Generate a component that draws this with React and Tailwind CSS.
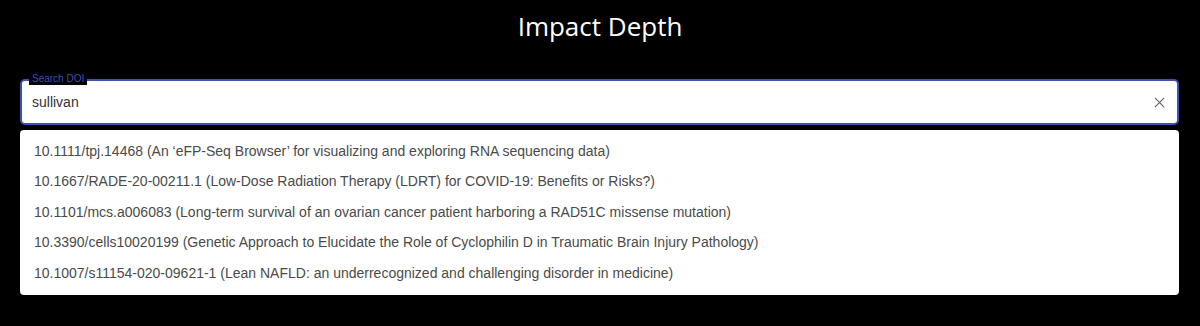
import React from 'react';

const results = [
  "10.1111/tpj.14468 (An \u2018eFP-Seq Browser\u2019 for visualizing and exploring RNA sequencing data)",
  "10.1667/RADE-20-00211.1 (Low-Dose Radiation Therapy (LDRT) for COVID-19: Benefits or Risks?)",
  "10.1101/mcs.a006083 (Long-term survival of an ovarian cancer patient harboring a RAD51C missense mutation)",
  "10.3390/cells10020199 (Genetic Approach to Elucidate the Role of Cyclophilin D in Traumatic Brain Injury Pathology)",
  "10.1007/s11154-020-09621-1 (Lean NAFLD: an underrecognized and challenging disorder in medicine)",
];

export default function App() {
  return (
    <div className="w-[1200px] h-[326px] bg-black px-[20px] pt-[8px] font-['Liberation_Sans',Arial,sans-serif]">
      <h1 className="text-center text-white text-[26px] leading-[36px] font-['Open_Sans',sans-serif]">
        Impact Depth
      </h1>

      {/* search field */}
      <div className="relative mt-[35px] h-[46px] w-[1159px] rounded-[5px] border-2 border-[#3f51b5] bg-white flex items-center pl-[10px] pr-[12px]">
        <span className="absolute -top-[8px] left-[7px] px-[3px] bg-black text-[10px] leading-[12px] text-[#3f51b5] rounded-t-[2px]">
          Search DOI
        </span>
        <span className="flex-1 text-[14px] text-[#333]">sullivan</span>
        <svg width="11" height="11" viewBox="0 0 12 12" className="text-[#666]">
          <path d="M1 1 L11 11 M11 1 L1 11" stroke="currentColor" strokeWidth="1.3" />
        </svg>
      </div>

      {/* suggestions */}
      <ul className="mt-[5px] w-[1159px] rounded-[4px] bg-white py-[6px]">
        {results.map((r) => (
          <li key={r} className="h-[30.5px] flex items-center pl-[14px] text-[14px] text-[#4a4a4a]">
            {r}
          </li>
        ))}
      </ul>
    </div>
  );
}
